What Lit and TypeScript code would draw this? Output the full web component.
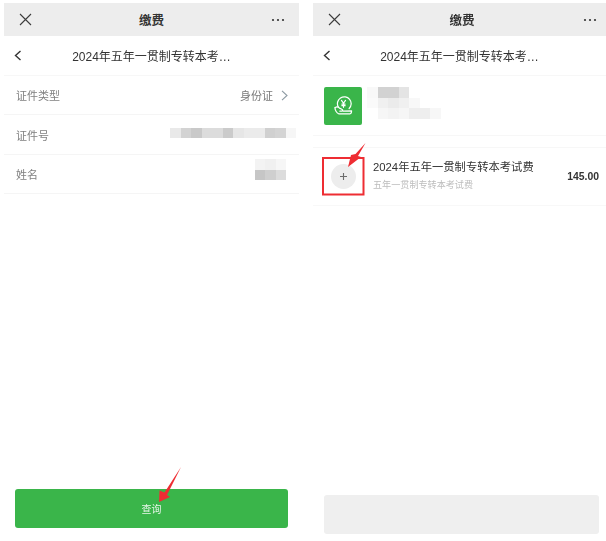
import { LitElement, html, css, svg } from "lit";
import { customElement } from "lit/decorators.js";

const idRow = ["#e9e9e9","#d3d3d3","#c9c9c9","#dcdcdc","#dcdcdc","#cbcbcb","#e6e6e6","#ebebeb","#ebebeb","#d0d0d0","#d4d4d4","#f6f6f6"];
const nameRows = [["#f3f3f3","#f0f0f0","#f6f6f6"],["#c6c6c6","#cfcfcf","#dcdcdc"]];
const orgRows = [
  ["#f8f8f8","#d2d2d2","#d2d2d2","#e4e4e4","#ffffff","#ffffff","#ffffff"],
  ["#fafafa","#f0f0f0","#ebebeb","#f0f0f0","#f8f8f8","#ffffff","#ffffff"],
  ["#ffffff","#f6f6f6","#f3f3f3","#f6f6f6","#eeeeee","#eeeeee","#f7f7f7"],
];

@customElement("app-root")
export class AppRoot extends LitElement {
  static styles = css`
    :host { display: block; width: 606px; height: 541px; position: relative; overflow: hidden; background: #fff;
      font-family: "Liberation Sans", "Noto Sans CJK SC", sans-serif; }
    .wrap { display: flex; height: 541px; box-sizing: border-box; padding: 3px 0 0 4px; gap: 14px; filter: blur(0.4px); }
    .panel { display: flex; flex-direction: column; }
    .left { width: 295px; padding-bottom: 13px; box-sizing: border-box; }
    .right { width: 293px; padding-bottom: 7px; box-sizing: border-box; }
    .top { height: 33px; flex: none; background: #ededed; display: flex; align-items: center; justify-content: space-between; padding: 0 14px 0 15px; }
    .right .top { padding-right: 9px; }
    .top .name { font-size: 12.5px; font-weight: 700; color: #333; }
    .nav { height: 40px; box-sizing: border-box; flex: none; display: flex; align-items: center; position: relative; justify-content: center; border-bottom: 1px solid #f7f7f7; }
    .nav .back { position: absolute; left: 10px; top: 14px; }
    .nav .t { font-size: 12px; color: #333; }
    .row { height: 39.4px; box-sizing: border-box; flex: none; display: flex; align-items: center; justify-content: space-between; padding: 0 11px 0 12px; border-bottom: 1px solid #f5f5f5; font-size: 11px; color: #808080; }
    .val { display: flex; align-items: center; gap: 8px; color: #7a7a7a; }
    .mosaic { display: grid; grid-auto-rows: 10.5px; }
    .cell { width: 10.5px; height: 10.5px; }
    .idm { margin: -3px -8px 0 0; }
    .nm { margin: -8px 2px 0 0; }
    .grow { flex: 1; }
    .btn { margin: 0 11px; height: 39px; flex: none; border-radius: 3px; background: #3ab54a; color: #e8f6ea; font-size: 10px; display: flex; align-items: center; justify-content: center; }
    .btn.off { margin: 0 7px 0 11px; background: #efefef; }
    .org { height: 60px; flex: none; display: flex; align-items: flex-start; padding: 11px 0 0 11px; gap: 5px; box-sizing: border-box; border-bottom: 1px solid #f7f7f7; }
    .logo { width: 38px; height: 38px; flex: none; border-radius: 2px; background: #3ab54a; display: flex; align-items: center; justify-content: center; }
    .gap { height: 12px; box-sizing: border-box; flex: none; border-bottom: 1px solid #f7f7f7; }
    .item { height: 58px; flex: none; display: flex; align-items: center; padding: 0 7px 0 18px; box-sizing: border-box; border-bottom: 1px solid #f8f8f8; }
    .plus { width: 25px; height: 25px; flex: none; border-radius: 50%; background: #ededed; display: flex; align-items: center; justify-content: center; }
    .info { margin-left: 17px; flex: 1; display: flex; flex-direction: column; gap: 6px; margin-top: -3px; }
    .info .a { font-size: 11.3px; line-height: 14px; color: #333; }
    .info .b { font-size: 9.1px; line-height: 11px; color: #bdbdbd; }
    .price { font-size: 10.4px; font-weight: 700; color: #333; }
    .marks { position: absolute; left: 0; top: 0; filter: blur(0.3px); }
  `;

  private close() {
    return html`<svg width="13" height="13" viewBox="0 0 13 13"><path d="M1 1L12 12M12 1L1 12" stroke="#3c3c3c" stroke-width="1.1" fill="none"/></svg>`;
  }
  private dots() {
    return html`<svg width="14" height="4" viewBox="0 0 14 4"><circle cx="2" cy="2" r="1.1" fill="#333"/><circle cx="7" cy="2" r="1.1" fill="#333"/><circle cx="12" cy="2" r="1.1" fill="#333"/></svg>`;
  }
  private back() {
    return html`<svg class="back" width="8" height="11" viewBox="0 0 8 11"><path d="M6.5 1L1.5 5.5L6.5 10" stroke="#333" stroke-width="1.4" fill="none"/></svg>`;
  }
  private mosaic(rows: string[][]) {
    return html`<div class="mosaic" style="grid-template-columns: repeat(${rows[0].length}, 10.5px)">
      ${rows.flat().map((c) => html`<div class="cell" style="background:${c}"></div>`)}
    </div>`;
  }
  private head(title: string) {
    return html`
      <div class="top">${this.close()}<span class="name">缴费</span>${this.dots()}</div>
      <div class="nav">${this.back()}<span class="t">${title}</span></div>`;
  }

  render() {
    const title = "2024年五年一贯制专转本考…";
    return html`
      <div class="wrap">
        <section class="panel left">
          ${this.head(title)}
          <div class="row"><span>证件类型</span>
            <span class="val">身份证
              <svg width="7" height="11" viewBox="0 0 7 11"><path d="M1 .8L6 5.5L1 10.2" stroke="#8d9aa3" stroke-width="1.1" fill="none"/></svg>
            </span></div>
          <div class="row"><span>证件号</span><span class="idm">${this.mosaic([idRow])}</span></div>
          <div class="row"><span>姓名</span><span class="nm">${this.mosaic(nameRows)}</span></div>
          <div class="grow"></div>
          <div class="btn">查询</div>
        </section>
        <section class="panel right">
          ${this.head(title)}
          <div class="org">
            <div class="logo">
              <svg width="21" height="21" viewBox="0 0 26 26" fill="none" stroke="#fff" stroke-width="1.5" stroke-linecap="round" stroke-linejoin="round">
                <path d="M6.5 13.5A8.5 8.5 0 1 1 20 15.5"/>
                <path d="M10.5 5.5L13 9L15.5 5.5M13 9V14M11 10H15M11 12H15"/>
                <path d="M2.5 14.5C4.5 13 6.5 13.5 8 15L11 16.5C12.5 17 12.5 18.8 11 18.8H8.5"/>
                <path d="M2.5 14.5C2.2 17 4.5 21 7 22H21C22.5 22 23 20 23 18.3L13 18.8"/>
              </svg>
            </div>
            ${this.mosaic(orgRows)}
          </div>
          <div class="gap"></div>
          <div class="item">
            <div class="plus"><svg width="9" height="9" viewBox="0 0 9 9"><path d="M4.5 1V8M1 4.5H8" stroke="#6d6d6d" stroke-width="1.1"/></svg></div>
            <div class="info"><span class="a">2024年五年一贯制专转本考试费</span><span class="b">五年一贯制专转本考试费</span></div>
            <span class="price">145.00</span>
          </div>
          <div class="grow"></div>
          <div class="btn off"></div>
        </section>
      </div>
      <svg class="marks" width="606" height="541" viewBox="0 0 606 541">
        ${svg`<rect x="323" y="158" width="40.5" height="36.5" fill="none" stroke="#ee2d33" stroke-width="2"/>
        <polygon points="365.5,143 355.5,154 351,155 348,167 361,157 358,156" fill="#ee2d33"/>
        <polygon points="181,467 164.5,492.5 159.5,490.5 159,502 170,497 167,495" fill="#ee2d33"/>`}
      </svg>
    `;
  }
}
